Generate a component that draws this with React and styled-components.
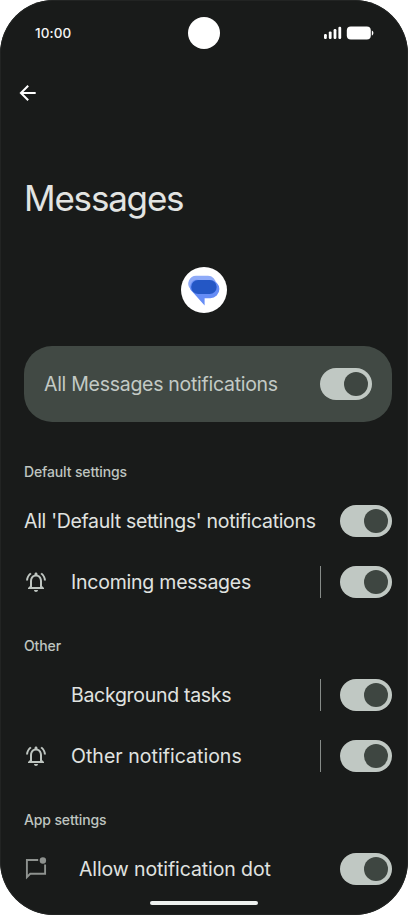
import React, { useState } from 'react';
import styled, { createGlobalStyle } from 'styled-components';
import { MdOutlineNotificationsActive } from 'react-icons/md';

const GlobalStyle = createGlobalStyle`
  * {
    box-sizing: border-box;
  }
  body {
    margin: 0;
    background: #fff;
    font-family: Inter, Roboto, sans-serif;
  }
`;

const Phone = styled.div`
  position: relative;
  width: 408px;
  height: 915px;
  overflow: hidden;
  border-radius: 54px;
  background: #191b1a;
  box-shadow: inset 0 0 0 1px #222423;
`;

const StatusBar = styled.div`
  display: grid;
  grid-template-columns: 1fr 32px 1fr;
  align-items: center;
  height: 65px;
  padding: 0 34px 0 35px;
`;

const Time = styled.span`
  color: #f4f5f4;
  font-size: 13.5px;
  font-weight: 500;
  letter-spacing: 0.1px;
`;

const Camera = styled.div`
  width: 32px;
  height: 32px;
  margin-left: -1px;
  border-radius: 50%;
  background: #fff;
`;

const StatusIcons = styled.div`
  display: flex;
  justify-content: flex-end;
`;

const TopBar = styled.div`
  display: flex;
  align-items: center;
  height: 56px;
  padding-left: 19px;
`;

const BackButton = styled.button`
  display: flex;
  padding: 0;
  border: 0;
  background: none;
  cursor: pointer;
`;

const Content = styled.main`
  display: flex;
  flex-direction: column;
  padding: 0 16px 0 24px;
`;

const Title = styled.h1`
  margin: 55px 0 0;
  height: 45px;
  color: #e2e4e2;
  font-size: 35px;
  font-weight: 400;
  line-height: 44px;
  letter-spacing: -1.2px;
`;

const AppIcon = styled.div`
  align-self: center;
  width: 46px;
  height: 46px;
  margin: 46px 8px 33px 0;
  border-radius: 50%;
  background: #fff;
`;

const MainCard = styled.div`
  display: flex;
  align-items: center;
  justify-content: space-between;
  height: 76px;
  margin-bottom: 16px;
  padding: 0 20px;
  border-radius: 28px;
  background: #414944;
`;

const Label = styled.span`
  flex: 1;
  color: ${(props) => props.$color || '#e0e3e0'};
  font-size: 19.5px;
  line-height: 28px;
  white-space: nowrap;
  letter-spacing: ${(props) => props.$track || 0}px;
`;

const Section = styled.section`
  height: 174px;
`;

const SectionTitle = styled.h2`
  height: 53px;
  margin: 0;
  padding-top: 24px;
  color: #bfc5c0;
  font-size: 14px;
  font-weight: 500;
  line-height: 20px;
  letter-spacing: -0.13px;
`;

const Row = styled.div`
  display: flex;
  align-items: center;
  height: 60px;
  margin-bottom: 1px;
`;

const IconSlot = styled.div`
  display: flex;
  flex: none;
  width: ${(props) => props.$width || 47}px;
  color: #bec5c0;
`;

const Divider = styled.div`
  width: 1px;
  height: 32px;
  margin-right: 19px;
  background: #868b88;
`;

const Track = styled.button`
  display: flex;
  flex: none;
  align-items: center;
  justify-content: ${(props) => (props.$on ? 'flex-end' : 'flex-start')};
  width: 52px;
  height: 32px;
  padding: 0 4px;
  border: 0;
  border-radius: 16px;
  background: #c0c8c3;
  cursor: pointer;
`;

const Thumb = styled.span`
  width: 24px;
  height: 24px;
  border-radius: 50%;
  background: #3e4641;
`;

const HomeBar = styled.div`
  position: absolute;
  bottom: 10px;
  left: 150px;
  width: 108px;
  height: 4px;
  border-radius: 2px;
  background: #eef1ef;
`;

const Toggle = () => {
  const [on, setOn] = useState(true);
  return (
    <Track $on={on} role="switch" aria-checked={on} onClick={() => setOn(!on)}>
      <Thumb />
    </Track>
  );
};

const BellIcon = () => <MdOutlineNotificationsActive size={24} />;

const ChatDotIcon = () => (
  <svg width="24" height="24" viewBox="0 0 24 24" fill="none">
    <path
      d="M14.2 3H2.9v17.2l3.3-3.4H21.1V7.5"
      stroke="#8e928f"
      strokeWidth="1.9"
    />
    <circle cx="18.9" cy="3.5" r="3.2" fill="#8e928f" />
  </svg>
);

const SignalIcons = () => (
  <svg width="50" height="14" viewBox="0 0 50 14" fill="#fff">
    <rect x="0" y="8" width="2.8" height="5" rx="1.2" />
    <rect x="4.8" y="5.4" width="2.8" height="7.6" rx="1.2" />
    <rect x="9.6" y="3" width="2.8" height="10" rx="1.2" />
    <rect x="14.4" y="0.8" width="2.8" height="12.2" rx="1.2" />
    <rect x="22.8" y="0.4" width="24" height="13" rx="4" />
    <path d="M47.8 4.4c1 .5 1.6 1.4 1.6 2.6s-.6 2.1-1.6 2.6z" />
  </svg>
);

const MessagesLogo = () => (
  <svg width="46" height="46" viewBox="0 0 46 46">
    <path d="M15.8 8.8H27a8 8 0 0 1 8 8v10H15L9.8 22.6A8 8 0 0 1 15.8 8.8z" fill="#8eaaf8" />
    <path d="M17.5 13H29.3a9.1 9.1 0 0 1 0 18.2H23.6v7.4L11.8 25.3A7 7 0 0 1 17.5 13z" fill="#668df6" />
    <rect x="10.2" y="13" width="25.5" height="14" rx="7" fill="#2457c5" />
  </svg>
);

const App = () => (
  <>
    <GlobalStyle />
    <Phone>
      <StatusBar>
        <Time>10:00</Time>
        <Camera />
        <StatusIcons>
          <SignalIcons />
        </StatusIcons>
      </StatusBar>
      <TopBar>
        <BackButton aria-label="Back">
          <svg width="18" height="18" viewBox="0 0 18 18" fill="none" stroke="#fff" strokeWidth="2">
            <path d="M16.7 9H2.3M9.2 1.7L1.9 9l7.3 7.3" />
          </svg>
        </BackButton>
      </TopBar>
      <Content>
        <Title>Messages</Title>
        <AppIcon>
          <MessagesLogo />
        </AppIcon>
        <MainCard>
          <Label $color="#c3cac5" $track={-0.28}>All Messages notifications</Label>
          <Toggle />
        </MainCard>

        <Section>
          <SectionTitle>Default settings</SectionTitle>
          <Row>
            <Label $track={-0.31}>All 'Default settings' notifications</Label>
            <Toggle />
          </Row>
          <Row>
            <IconSlot><BellIcon /></IconSlot>
            <Label $track={-0.23}>Incoming messages</Label>
            <Divider />
            <Toggle />
          </Row>
        </Section>

        <Section>
          <SectionTitle>Other</SectionTitle>
          <Row>
            <IconSlot />
            <Label $track={-0.3}>Background tasks</Label>
            <Divider />
            <Toggle />
          </Row>
          <Row>
            <IconSlot><BellIcon /></IconSlot>
            <Label $track={0.03}>Other notifications</Label>
            <Divider />
            <Toggle />
          </Row>
        </Section>

        <Section>
          <SectionTitle>App settings</SectionTitle>
          <Row>
            <IconSlot $width={55}><ChatDotIcon /></IconSlot>
            <Label $track={-0.1}>Allow notification dot</Label>
            <Toggle />
          </Row>
        </Section>
      </Content>
      <HomeBar />
    </Phone>
  </>
);

export default App;
